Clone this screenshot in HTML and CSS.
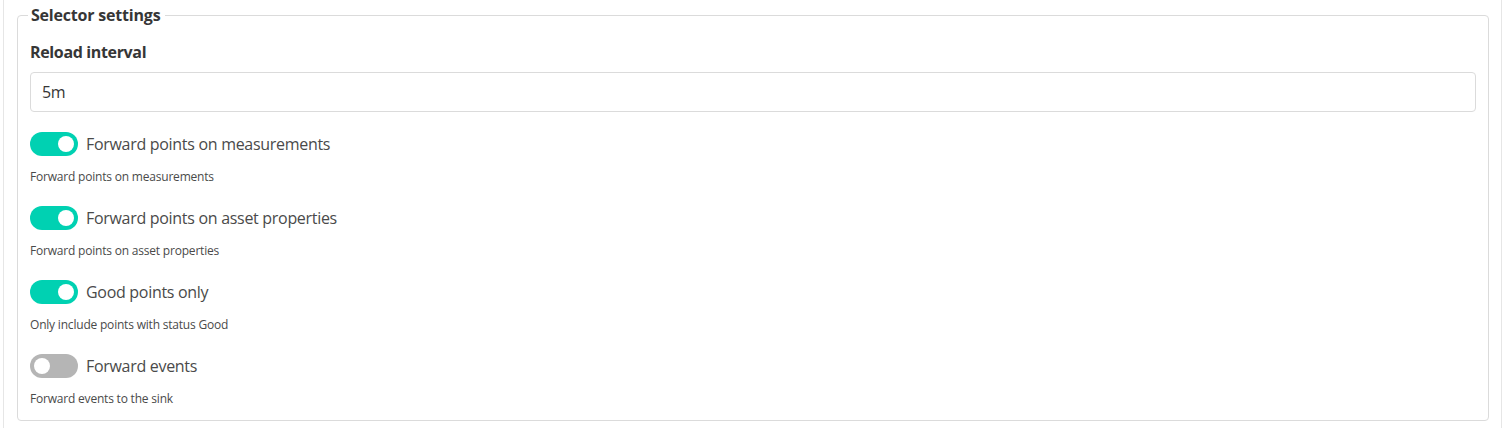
FILE: index.html
```html
<!DOCTYPE html>
<html lang="en">
<head>
<meta charset="utf-8">
<title>Selector settings</title>
<link rel="stylesheet" href="styles.css">
</head>
<body>
<div class="panel">
  <fieldset class="group">
    <legend class="group-title">Selector settings</legend>
    <div class="field">
      <label class="label" for="reload">Reload interval</label>
      <input class="input" id="reload" type="text" value="5m">
    </div>
    <div class="switch-field">
      <label class="switch-row"><span class="switch on"><span class="knob"></span></span><span class="switch-label">Forward points on measurements</span></label>
      <p class="help">Forward points on measurements</p>
    </div>
    <div class="switch-field">
      <label class="switch-row"><span class="switch on"><span class="knob"></span></span><span class="switch-label">Forward points on asset properties</span></label>
      <p class="help">Forward points on asset properties</p>
    </div>
    <div class="switch-field">
      <label class="switch-row"><span class="switch on"><span class="knob"></span></span><span class="switch-label">Good points only</span></label>
      <p class="help">Only include points with status Good</p>
    </div>
    <div class="switch-field">
      <label class="switch-row"><span class="switch"><span class="knob"></span></span><span class="switch-label">Forward events</span></label>
      <p class="help">Forward events to the sink</p>
    </div>
  </fieldset>
</div>
</body>
</html>
```
FILE: styles.css
```css
* { box-sizing: border-box; }
html, body { margin: 0; padding: 0; background: #fff; }
body {
  font-family: "Open Sans", "DejaVu Sans", sans-serif;
  color: #4a4a4a;
  font-size: 16px;
  line-height: 1.5;
  letter-spacing: -0.3px;
}
.panel {
  margin: 0 4px 0 3px;
  padding: 3px 12px 0 13px;
  border-left: 1px solid #e6e6e6;
  border-right: 1px solid #e6e6e6;
  height: 428px;
}
.group {
  margin: 0;
  border: 1px solid #dbdbdb;
  border-radius: 4px;
  padding: 0 12px 12px 12px;
  min-width: 0;
}
.group-title {
  font-weight: 700;
  color: #363636;
  padding: 0 5px 0 3px;
  margin-left: -2px;
  line-height: 24px;
  letter-spacing: -0.2px;
}
.field { padding-top: 13px; }
.label {
  display: block;
  font-weight: 700;
  color: #363636;
  line-height: 24px;
  margin-bottom: 8px;
  letter-spacing: -0.35px;
}
.input {
  display: block;
  width: 100%;
  height: 40px;
  border: 1px solid #dbdbdb;
  border-radius: 4px;
  padding: 0 11px;
  font: inherit;
  letter-spacing: -0.3px;
  color: #363636;
  background: #fff;
  outline: none;
}
.switch-field { margin-top: 20px; }
.switch-row {
  display: flex;
  align-items: center;
  gap: 8px;
  height: 24px;
}
.switch {
  position: relative;
  width: 48px;
  height: 24px;
  border-radius: 12px;
  background: #b5b5b5;
  flex: none;
}
.switch.on { background: #00d1b2; }
.knob {
  position: absolute;
  top: 4px;
  left: 4px;
  width: 16px;
  height: 16px;
  border-radius: 50%;
  background: #fff;
}
.switch.on .knob { left: 28px; }
.switch-label { color: #4a4a4a; }
.help {
  margin: 12px 0 0;
  font-size: 12px;
  line-height: 18px;
  color: #4a4a4a;
  letter-spacing: -0.2px;
}
```
